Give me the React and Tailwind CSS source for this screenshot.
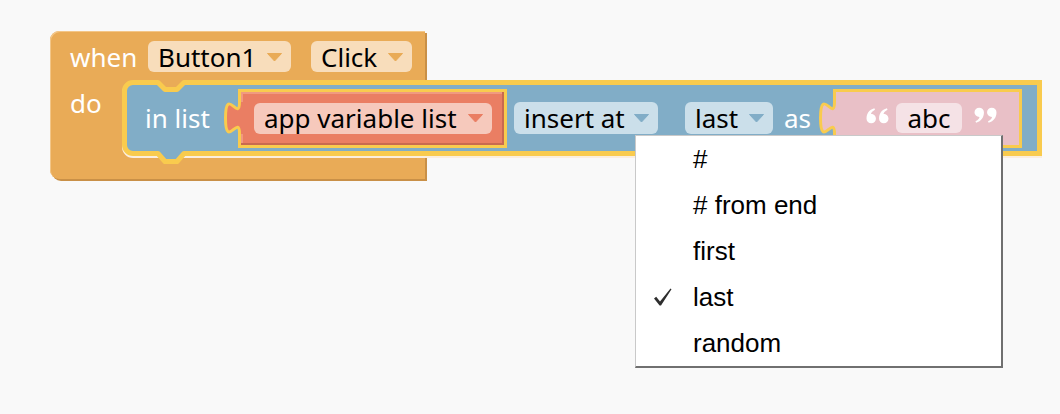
import React from 'react';

function Caret({ className }) {
  return (
    <svg width="17" height="10" viewBox="0 0 17 10" className={className}>
      <path d="M1.5 1.5h14L8.5 9z" fill="currentColor" stroke="currentColor" strokeWidth="1" strokeLinejoin="round" />
    </svg>
  );
}

function Pill({ label, className, caretClass }) {
  return (
    <div className={`flex shrink-0 items-center justify-between rounded-[6px] pl-[10px] pr-[8px] text-black ${className}`}>
      <span className="leading-none">{label}</span>
      <Caret className={caretClass} />
    </div>
  );
}

// puzzle connector on the left edge of a value block
function OutputTab({ fill }) {
  return (
    <svg width="18" height="38" viewBox="0 0 18 38" className="relative z-10 -mr-[4px] shrink-0 overflow-visible">
      <path d="M15.5 3c0 21-14-17-14 16s14-5.3 14 16H19V3z" fill={fill} />
      <path d="M15.5 3c0 21-14-17-14 16s14-5.3 14 16" fill="none" stroke="#f9cb4e" strokeWidth="3" />
    </svg>
  );
}

const comma = 'M9.5 11a4.5 4.5 0 1 1-9 0C0.5 6 3 2.5 8 1l0.6 1.4C5.8 3.8 4.8 5.5 4.8 6.6C7.5 6.6 9.5 8.5 9.5 11Z';

function Quote({ close }) {
  return (
    <svg width="23" height="17" viewBox="0 0 22 16" className={close ? 'rotate-180' : ''}>
      <path d={comma} fill="white" />
      <path d={comma} fill="white" transform="translate(12 0)" />
    </svg>
  );
}

function Check() {
  return (
    <svg width="20" height="18" viewBox="0 0 20 18" className="ml-[17px]">
      <path d="M1 10.5L3.2 8.8L7 13.5L17.5 0.5L18.5 1.3L8 17.5L6.6 17.5Z" fill="#2e2e2e" />
    </svg>
  );
}

const items = ['#', '# from end', 'first', 'last', 'random'];

export default function App() {
  return (
    <div className="relative h-[414px] w-[1060px] overflow-hidden bg-[#f9f9f9] font-['Noto_Sans',sans-serif] text-[26px]">
      <div className="pl-[50px] pt-[31px]">
        {/* event block */}
        <div className="relative h-[148px] w-[375px] rounded-l-[9px] bg-[#e9ab57] shadow-[2px_2px_0_#c99047,inset_1px_1px_0_#f3c688]">
          <div className="flex h-[41px] items-center pl-[20px] pt-[10px]">
            <span className="w-[78px] shrink-0 leading-none text-white">when</span>
            <Pill label="Button1" className="h-[31px] w-[143px] bg-[#f8ddbb]" caretClass="text-[#e9ab57]" />
            <Pill label="Click" className="ml-[20px] h-[31px] w-[101px] bg-[#f8ddbb]" caretClass="text-[#e9ab57]" />
          </div>

          <div className="mt-[8px] flex items-start">
            <span className="w-[72px] shrink-0 pl-[20px] pt-[6px] leading-[34px] text-white">do</span>

            {/* statement block */}
            <div className="relative flex h-[76px] w-[920px] shrink-0 items-center rounded-l-[11px] border-[5px] border-[#f9cb4e] bg-[#81adc7] shadow-[0_2px_0_#fbeede]">
              <svg width="40" height="16" viewBox="0 0 40 16" className="absolute left-[23px] top-[-5px] overflow-visible">
                <path d="M-1-1H41V2.5H34L27 9.5H15L8 2.5H-1Z" fill="#e9ab57" />
                <path d="M-1 2.5H8L15 9.5H27L34 2.5H41" fill="none" stroke="#f9cb4e" strokeWidth="5" strokeLinejoin="round" />
              </svg>
              <svg width="40" height="16" viewBox="0 0 40 16" className="absolute left-[23px] top-[66px] overflow-visible">
                <path d="M-1-1H41V2.5H34L27 10.5H15L8 2.5H-1Z" fill="#81adc7" />
                <path d="M-1 2.5H8L15 10.5H27L34 2.5H41" fill="none" stroke="#f9cb4e" strokeWidth="5" strokeLinejoin="round" />
              </svg>

              <span className="ml-[18px] w-[79px] shrink-0 leading-none text-white">in list</span>

              <OutputTab fill="#ea7e63" />
              <div className="flex h-[59px] w-[269px] shrink-0 items-center border-[3px] border-[#f9cb4e] bg-[#ea7e63] pl-[13px] shadow-[inset_-2px_-2px_0_#c86a50,inset_2px_2px_0_#f09a80]">
                <Pill label="app variable list" className="h-[31px] w-[238px] bg-[#f6c9bc]" caretClass="text-[#ea7e63]" />
              </div>

              <Pill label="insert at" className="ml-[7px] h-[32px] w-[144px] bg-[#cbdfea]" caretClass="text-[#81adc7]" />
              <Pill label="last" className="ml-[27px] h-[32px] w-[88px] bg-[#cbdfea]" caretClass="text-[#81adc7]" />
              <span className="ml-[11px] w-[35px] shrink-0 leading-none text-white">as</span>

              <OutputTab fill="#e9c0c7" />
              <div className="flex h-[59px] w-[189px] shrink-0 items-center border-[3px] border-[#f9cb4e] bg-[#e9c0c7] pl-[30px]">
                <div className="-mt-[5px] w-[30px] shrink-0">
                  <Quote />
                </div>
                <div className="flex h-[30px] w-[66px] shrink-0 items-center justify-center rounded-[6px] bg-[#f5e2e6] leading-none text-black">abc</div>
                <div className="-mt-[5px] ml-[12px] shrink-0">
                  <Quote close />
                </div>
              </div>
            </div>
          </div>
        </div>
      </div>

      {/* dropdown menu */}
      <div className="absolute left-[635px] top-[135px] w-[368px] border-b-2 border-l border-r-2 border-t border-b-[#707070] border-l-[#c9c9c9] border-r-[#707070] border-t-[#c9c9c9] bg-white font-['Liberation_Sans',Arial,sans-serif] text-[26px] text-black">
        {items.map((item) => (
          <div key={item} className="flex h-[46px] items-center">
            <div className="w-[57px] shrink-0">{item === 'last' && <Check />}</div>
            <span className="leading-none">{item}</span>
          </div>
        ))}
      </div>
    </div>
  );
}
